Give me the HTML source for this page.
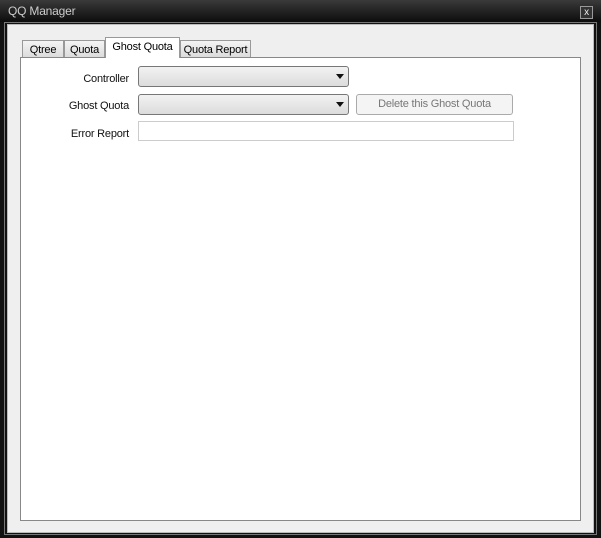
<html><head><style>
body{margin:0;width:601px;height:538px;background:#111;position:relative;font-family:"Liberation Sans",sans-serif;font-size:11px;letter-spacing:-0.2px;overflow:hidden;white-space:nowrap}
.a{position:absolute;box-sizing:border-box}
.lbl{position:absolute;text-align:right;width:129px;left:0;color:#111}
.combo{background:linear-gradient(#f2f2f2,#dcdcdc);border:1px solid #777;border-radius:3px}
.arr{position:absolute;right:4px;top:7px;width:0;height:0;border-left:4px solid transparent;border-right:4px solid transparent;border-top:5px solid #111}
.tab{position:absolute;box-sizing:border-box;border:1px solid #999;border-bottom:none;background:linear-gradient(#f4f4f4,#dcdcdc);text-align:center;line-height:18px}
</style></head><body>
<div class="a" style="left:0;top:0;width:601px;height:22px;background:linear-gradient(#3a3a3a,#0c0c0c)"></div>
<div class="a" style="left:8px;top:4px;color:#ccc;font-size:12px">QQ Manager</div>
<div class="a" style="left:580px;top:6px;width:13px;height:13px;border:1px solid #999;background:#333;color:#eee;font-size:10px;text-align:center;line-height:11px">x</div>
<div class="a" style="left:4px;top:22px;width:593px;height:513px;border:1px solid #777"></div>
<div class="a" style="left:7px;top:24px;width:587px;height:509px;background:#efefef;border:1px solid #bbb"></div>
<div class="a" style="left:20px;top:57px;width:561px;height:464px;background:#fff;border:1px solid #888"></div>
<div class="tab" style="left:22px;top:40px;width:42px;height:17px">Qtree</div>
<div class="tab" style="left:64px;top:40px;width:41px;height:17px">Quota</div>
<div class="tab" style="left:105px;top:37px;width:75px;height:21px;background:#fff;line-height:19px">Ghost Quota</div>
<div class="tab" style="left:180px;top:40px;width:71px;height:17px">Quota Report</div>
<div class="lbl" style="top:73px">Controller</div>
<div class="lbl" style="top:100px">Ghost Quota</div>
<div class="lbl" style="top:128px">Error Report</div>
<div class="a combo" style="left:138px;top:66px;width:211px;height:21px"><div class="arr"></div></div>
<div class="a combo" style="left:138px;top:94px;width:211px;height:21px"><div class="arr"></div></div>
<div class="a" style="left:356px;top:94px;width:157px;height:21px;border:1px solid #aaa;border-radius:3px;background:#f4f4f4;color:#777;text-align:center;line-height:19px">Delete this Ghost Quota</div>
<div class="a" style="left:138px;top:121px;width:376px;height:20px;border:1px solid #ccc;background:#fff"></div>
</body></html>
